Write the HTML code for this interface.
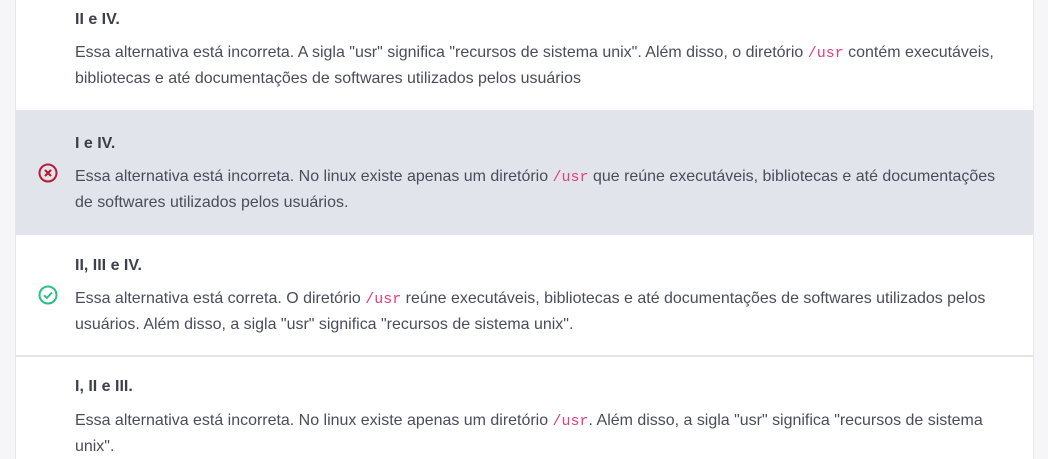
<!DOCTYPE html>
<html><head><meta charset="utf-8"><style>
body{margin:0;width:1048px;height:459px;overflow:hidden;background:#f6f6f8;font-family:"Liberation Sans",sans-serif;}
.card{position:absolute;left:15px;top:0;width:1019px;height:459px;background:#fff;border-left:1px solid #e6e7ec;border-right:1px solid #e6e7ec;box-sizing:border-box}
.s{position:absolute;left:0;width:100%}
.t{position:absolute;left:59px;font-weight:bold;font-size:16px;color:#3d3f4c;line-height:24px}
.b{position:absolute;left:59px;width:930px;font-size:15.97px;line-height:25px;color:#4a4c5a}
code{font-family:"Liberation Mono",monospace;color:#e0407b;font-size:15px}
svg{position:absolute}
</style></head><body>
<div class="card">
<div class="s" style="top:0;height:110px">
<div class="t" style="top:8px">II e IV.</div>
<div class="b" style="top:40px">Essa alternativa está incorreta. A sigla "usr" significa "recursos de sistema unix". Além disso, o diretório <code>/usr</code> contém executáveis, bibliotecas e até documentações de softwares utilizados pelos usuários</div>
</div>
<div class="s" style="top:110px;height:125px;background:#e1e4eb">
<div class="t" style="top:22px">I e IV.</div>
<svg style="left:22px;top:53px" width="20" height="20" viewBox="0 0 20 20"><circle cx="10" cy="10" r="8.5" fill="none" stroke="#b81c33" stroke-width="2"/><path d="M7 7L13 13M13 7L7 13" stroke="#b81c33" stroke-width="2.2"/></svg>
<div class="b" style="top:54px">Essa alternativa está incorreta. No linux existe apenas um diretório <code>/usr</code> que reúne executáveis, bibliotecas e até documentações de softwares utilizados pelos usuários.</div>
</div>
<div class="s" style="top:235px;height:120px;border-bottom:2px solid #e3e5ea">
<div class="t" style="top:19px">II, III e IV.</div>
<svg style="left:22px;top:50px" width="20" height="20" viewBox="0 0 20 20"><circle cx="10" cy="10" r="8.5" fill="none" stroke="#2bbf85" stroke-width="2"/><path d="M6 10.3L8.8 13L14 7.5" fill="none" stroke="#2bbf85" stroke-width="2"/></svg>
<div class="b" style="top:51px">Essa alternativa está correta. O diretório <code>/usr</code> reúne executáveis, bibliotecas e até documentações de softwares utilizados pelos usuários. Além disso, a sigla "usr" significa "recursos de sistema unix".</div>
</div>
<div class="s" style="top:357px;height:102px">
<div class="t" style="top:18px">I, II e III.</div>
<div class="b" style="top:51px">Essa alternativa está incorreta. No linux existe apenas um diretório <code>/usr</code>. Além disso, a sigla "usr" significa "recursos de sistema unix".</div>
</div>
</div>
</body></html>
